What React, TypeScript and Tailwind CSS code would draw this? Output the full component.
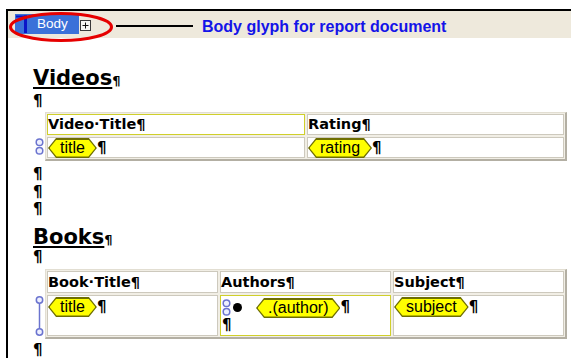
import React from "react";

const SANS = "font-['Liberation_Sans',Arial,sans-serif]";
const DJ = "font-['DejaVu_Sans',Verdana,sans-serif]";
const PIL = `${DJ} font-bold text-[15px] text-black`;

function Pil({ lh = "leading-[18px]" }: { lh?: string }) {
  return <span className={`${PIL} ${lh} block shrink-0`}>¶</span>;
}

function PilLine({ className = "" }: { className?: string }) {
  return <div className={`${PIL} leading-[17.5px] h-[17.5px] ${className}`}>¶</div>;
}

function Tag({ label }: { label: string }) {
  return (
    <span className="inline-flex h-[20px] shrink-0 bg-[#6e6e00] p-[1.5px] [clip-path:polygon(0_50%,8px_0,calc(100%_-_8px)_0,100%_50%,calc(100%_-_8px)_100%,8px_100%)]">
      <span
        className={`flex h-full items-center bg-[#ffff00] px-[10.5px] text-[16px] leading-none text-black ${SANS} [clip-path:polygon(0_50%,7px_0,calc(100%_-_7px)_0,100%_50%,calc(100%_-_7px)_100%,7px_100%)]`}
      >
        {label}
      </span>
    </span>
  );
}

function Chain() {
  return (
    <svg width="9" height="17" viewBox="0 0 9 17" className="shrink-0 block">
      <circle cx="4.5" cy="4.3" r="3.3" fill="#eef0ff" stroke="#6b74cf" strokeWidth="1.5" />
      <circle cx="4.5" cy="12.7" r="3.3" fill="#eef0ff" stroke="#6b74cf" strokeWidth="1.5" />
    </svg>
  );
}

function Connector() {
  return (
    <svg width="9" height="40" viewBox="0 0 9 40" className="absolute left-[-12px] top-[1px]">
      <line x1="4.5" y1="7" x2="4.5" y2="33" stroke="#6b74cf" strokeWidth="1.5" />
      <circle cx="4.5" cy="4" r="3.2" fill="#eef0ff" stroke="#6b74cf" strokeWidth="1.5" />
      <circle cx="4.5" cy="36" r="3.2" fill="#eef0ff" stroke="#6b74cf" strokeWidth="1.5" />
    </svg>
  );
}

function HeadCell({ text, w, selected = false }: { text: string; w: string; selected?: boolean }) {
  return (
    <div
      className={`${w} h-full bg-white border ${selected ? "border-[#cfcf2a]" : "border-[#cdc9bd]"} flex items-center`}
    >
      <span className={`${DJ} font-bold text-[14.5px] leading-[19px] text-black whitespace-nowrap`}>{text}</span>
    </div>
  );
}

function Table({ children }: { children: React.ReactNode }) {
  return (
    <div className="ml-[12px] w-[522px] bg-[#f1eee5] border-t border-l border-r-2 border-b-2 border-t-[#e2ded2] border-l-[#e2ded2] border-r-[#b3afa3] border-b-[#b3afa3] p-[1px] flex flex-col gap-[2px]">
      {children}
    </div>
  );
}

function Heading({ text, className = "" }: { text: string; className?: string }) {
  return (
    <div className={`flex items-baseline h-[24px] ${className}`}>
      <span className={`${DJ} font-bold text-[21px] leading-[24px] text-black underline decoration-2 underline-offset-[2px] block`}>
        {text}
      </span>
      <span className={`${DJ} font-bold text-[13px] text-black leading-none block`}>¶</span>
    </div>
  );
}

export default function App() {
  return (
    <div className="w-[571px] h-[358px] overflow-hidden bg-white pt-[9px] pl-[6px]">
      <div className="h-full border-t-2 border-l-2 border-black flex flex-col">
        {/* glyph band */}
        <div className="relative h-[27px] shrink-0 bg-[#eee9dc] flex items-start">
          <div className="ml-[7px] mt-[3px] h-[20px] w-[64px] bg-[#3b71d9] relative flex items-center">
            <svg width="14" height="20" viewBox="0 0 14 20" className="absolute left-0 top-0">
              <rect x="1" y="1.5" width="11" height="2" fill="#0b14c8" />
              <rect x="9" y="1.5" width="3" height="17.5" fill="#0b14c8" />
            </svg>
            <span className={`${SANS} ml-[22px] text-[13.5px] leading-none text-white`}>Body</span>
          </div>
          <svg width="11" height="11" viewBox="0 0 11 11" className="ml-[1px] mt-[9px] shrink-0">
            <rect x="0.5" y="0.5" width="10" height="10" fill="#f7f7f4" stroke="#3a3a3a" />
            <line x1="2.5" y1="5.5" x2="8.5" y2="5.5" stroke="#111" />
            <line x1="5.5" y1="2.5" x2="5.5" y2="8.5" stroke="#111" />
          </svg>
          <div className="ml-[25px] mt-[14px] w-[77px] h-[2px] bg-black shrink-0" />
          <span className={`${SANS} ml-[9px] mt-[8px] font-bold text-[16px] leading-[16px] text-[#1414e8] whitespace-nowrap`}>
            Body glyph for report document
          </span>
          <svg width="112" height="36" viewBox="0 0 112 36" className="absolute left-0 top-0 z-10 overflow-visible pointer-events-none">
            <ellipse cx="53" cy="16" rx="50.5" ry="13.5" fill="none" stroke="#e60000" strokeWidth="3" />
          </svg>
        </div>

        {/* document */}
        <div className="pl-[25px] flex flex-col">
          <Heading text="Videos" className="mt-[28px]" />
          <PilLine className="mt-[3px]" />

          <div className="mt-[1.5px]">
            <Table>
              <div className="flex gap-[2px] h-[21px]">
                <HeadCell text="Video·Title¶" w="w-[258px]" selected />
                <HeadCell text="Rating¶" w="w-[257px]" />
              </div>
              <div className="relative flex gap-[2px] h-[21px]">
                <div className="absolute left-[-12px] top-[1px]"><Chain /></div>
                <div className="w-[258px] h-full bg-white border border-[#cdc9bd] flex items-start">
                  <Tag label="title" />
                  <Pil lh="leading-[20px]" />
                </div>
                <div className="w-[257px] h-full bg-white border border-[#cdc9bd] flex items-start">
                  <Tag label="rating" />
                  <Pil lh="leading-[20px]" />
                </div>
              </div>
            </Table>
          </div>

          <div className="mt-[5px] flex flex-col">
            <PilLine />
            <PilLine />
            <PilLine />
          </div>

          <Heading text="Books" className="mt-[6px]" />
          <PilLine className="mt-[0px]" />

          <div className="mt-[3px]">
            <Table>
              <div className="flex gap-[2px] h-[22px]">
                <HeadCell text="Book·Title¶" w="w-[171px]" />
                <HeadCell text="Authors¶" w="w-[171px]" />
                <HeadCell text="Subject¶" w="w-[171px]" />
              </div>
              <div className="relative flex gap-[2px] h-[41px]">
                <Connector />
                <div className="w-[171px] h-full bg-white border border-[#cdc9bd] pt-[1px] flex items-start">
                  <Tag label="title" />
                  <Pil lh="leading-[20px]" />
                </div>
                <div className="w-[171px] h-full bg-white border border-[#cfcf2a] pt-[1px] flex flex-col">
                  <div className="flex items-center h-[20px]">
                    <span className="ml-[1px]"><Chain /></span>
                    <div className="ml-[2px] w-[9px] h-[9px] rounded-full bg-black shrink-0" />
                    <span className="ml-[14px]"><Tag label=".(author)" /></span>
                    <Pil lh="leading-[20px]" />
                  </div>
                  <div className="ml-[1px]"><Pil lh="leading-[17px]" /></div>
                </div>
                <div className="w-[171px] h-full bg-white border border-[#cdc9bd] pt-[1px] flex items-start">
                  <Tag label="subject" />
                  <Pil lh="leading-[20px]" />
                </div>
              </div>
            </Table>
          </div>

          <PilLine className="mt-[3px]" />
        </div>
      </div>
    </div>
  );
}
